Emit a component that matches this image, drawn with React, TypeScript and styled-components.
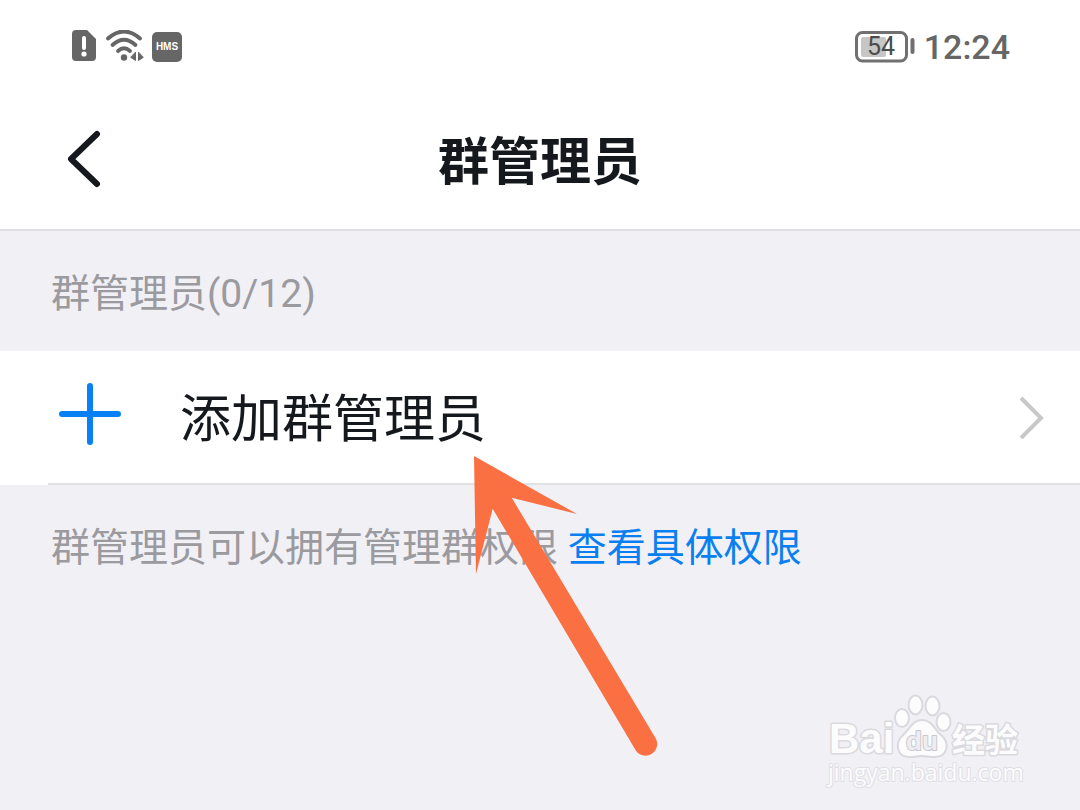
import React from 'react';
import styled, { createGlobalStyle } from 'styled-components';

const GlobalStyle = createGlobalStyle`
  *, *::before, *::after { box-sizing: border-box; }
  body {
    margin: 0;
    background: #f1f0f5;
    font-family: Roboto, 'Noto Sans CJK SC', sans-serif;
  }
`;

const Page = styled.div`
  position: relative;
  min-height: 100vh;
  overflow: hidden;
  background: #f1f0f5;
`;

const Top = styled.header`
  background: #fff;
  border-bottom: 2px solid #e0e1e2;
`;

const StatusBar = styled.div`
  display: flex;
  align-items: center;
  justify-content: space-between;
  height: 94px;
  padding: 0 70px;
`;

const StatusGroup = styled.div`
  display: flex;
  align-items: center;
  gap: 8px;
  color: #666;
`;

const Hms = styled.span`
  width: 30px;
  height: 30px;
  border-radius: 5px;
  background: #666;
  color: #fff;
  font: bold 10px/30px 'Liberation Sans', sans-serif;
  text-align: center;
`;

const Clock = styled.time`
  font-size: 34px;
  line-height: 40px;
  font-weight: 500;
`;

const NavBar = styled.div`
  display: grid;
  grid-template-columns: 80px 1fr 80px;
  align-items: center;
  height: 135px;
  padding: 0 44px;
`;

const BackButton = styled.button`
  display: flex;
  justify-content: center;
  width: 80px;
  padding: 10px 0 16px;
  border: 0;
  background: none;
  cursor: pointer;
`;

const Title = styled.h1`
  margin: 0;
  padding-top: 2px;
  color: #15181c;
  font-size: 51px;
  line-height: 60px;
  font-weight: 700;
  text-align: center;
`;

const Note = styled.p`
  margin: 0;
  padding: 35px 51px 29px;
  color: #9a9a9f;
  font-size: 39px;
  line-height: 56px;
`;

const NoteLink = styled.a`
  color: #0a80f0;
  text-decoration: none;
`;

const AddRow = styled.button`
  position: relative;
  display: flex;
  align-items: center;
  width: 100%;
  height: 134px;
  padding: 0 34px 2px 56px;
  border: 0;
  background: #fff;
  color: #15181c;
  font: inherit;
  font-size: 51px;
  line-height: 60px;
  text-align: left;
  cursor: pointer;

  &::after {
    content: '';
    position: absolute;
    right: 0;
    bottom: 0;
    left: 48px;
    height: 2px;
    background: #e0e2e4;
  }
`;

const RowLabel = styled.span`
  flex: 1;
  margin-left: 56px;
  padding-top: 6px;
`;

const Pointer = styled.svg`
  position: absolute;
  top: 452px;
  left: 470px;
  pointer-events: none;
`;

const Watermark = styled.svg`
  position: absolute;
  right: 50px;
  bottom: 15px;
  pointer-events: none;
`;

const SimIcon = () => (
  <svg width="28" height="34" viewBox="0 0 28 34" aria-hidden="true">
    <path d="M6 0H17L26 9V27Q26 31 22 31H6Q2 31 2 27V4Q2 0 6 0Z" fill="#666" />
    <path d="M14 8V18" stroke="#fff" strokeWidth="4" strokeLinecap="round" />
    <circle cx="14" cy="24" r="2.6" fill="#fff" />
  </svg>
);

const WifiIcon = () => (
  <svg width="38" height="34" viewBox="0 0 38 34" fill="none" stroke="#666" strokeWidth="3.8" strokeLinecap="round" aria-hidden="true">
    <path d="M2 8.5Q18 -5.5 34 8.5" />
    <path d="M6.5 15Q18 4.5 29.5 15" />
    <path d="M12 21Q18 15.5 24 21" />
    <circle cx="18" cy="27.5" r="3.2" fill="#666" stroke="none" />
    <path d="M29.5 22.5V30.5L25 27.5ZM32.5 22.5V30.5L37 27.5Z" fill="#666" strokeWidth="1" strokeLinejoin="round" />
  </svg>
);

const BatteryIcon = () => (
  <svg width="62" height="34" viewBox="0 0 62 34" role="img" aria-label="54%">
    <rect x="2.5" y="2.5" width="50" height="28.5" rx="6" fill="none" stroke="#707070" strokeWidth="3" />
    <rect x="7" y="7" width="25" height="20" rx="2" fill="#c6c6c6" />
    <rect x="56.5" y="8" width="4" height="16" rx="2" fill="#707070" />
    <text x="27" y="25" textAnchor="middle" fontFamily="Roboto, sans-serif" fontSize="25" fill="#4c4c4c">54</text>
  </svg>
);

const App = () => (
  <Page>
    <GlobalStyle />
    <Top>
      <StatusBar>
        <StatusGroup>
          <SimIcon />
          <WifiIcon />
          <Hms>HMS</Hms>
        </StatusGroup>
        <StatusGroup>
          <BatteryIcon />
          <Clock>12:24</Clock>
        </StatusGroup>
      </StatusBar>
      <NavBar>
        <BackButton type="button" aria-label="返回">
          <svg width="34" height="58" viewBox="0 0 34 58" fill="none" stroke="#15181c" strokeWidth="6" strokeLinecap="round" strokeLinejoin="round" aria-hidden="true">
            <path d="M30 4L4 29L30 54" />
          </svg>
        </BackButton>
        <Title>群管理员</Title>
      </NavBar>
    </Top>
    <main>
      <Note>群管理员(0/12)</Note>
      <AddRow type="button">
        <svg width="68" height="68" viewBox="0 0 68 68" stroke="#0a80f5" strokeWidth="6" strokeLinecap="round" aria-hidden="true">
          <path d="M34 3V59M6 31H62" />
        </svg>
        <RowLabel>添加群管理员</RowLabel>
        <svg width="28" height="44" viewBox="0 0 28 44" fill="none" stroke="#c8c8c8" strokeWidth="4" aria-hidden="true">
          <path d="M3 3L23 23L3 43" />
        </svg>
      </AddRow>
      <Note>
        群管理员可以拥有管理群权限 <NoteLink href="#permissions">查看具体权限</NoteLink>
      </Note>
    </main>
    <Pointer width="192" height="310" viewBox="0 0 192 310" aria-hidden="true">
      <path d="M4 4L107 62L41.7 45.7L185.5 286A11.5 11.5 0 0 1 165.5 298L22.7 56.7L6 122Z" fill="#fa7042" />
    </Pointer>
    <Watermark width="206" height="104" viewBox="0 0 206 104" fill="#fcfcfd" stroke="#d9d9de" strokeWidth="2" strokeLinejoin="round" fontFamily="'Liberation Sans', 'Noto Sans CJK SC', sans-serif">
      <ellipse cx="78" cy="27" rx="7" ry="9" />
      <ellipse cx="91.5" cy="14" rx="7" ry="9.5" />
      <ellipse cx="108.5" cy="15" rx="7" ry="9.5" />
      <ellipse cx="119.5" cy="31" rx="7" ry="9" />
      <path d="M98 29C108 29 110 38 117 44C126 51 124 66 111 66C105 66 102 65 98 65C94 65 90 66 85 66C72 66 71 51 79 44C86 38 88 29 98 29Z" />
      <g paintOrder="stroke">
        <text x="5" y="62" fontSize="42" fontWeight="700" strokeWidth="3">Bai</text>
        <text x="82" y="59" fontSize="26" fontWeight="700" fill="#eeeef2" stroke="#c8c8ce">du</text>
        <text x="128" y="61" fontSize="33" fontWeight="700" strokeWidth="3">经验</text>
        <text x="4" y="90" fontSize="23" stroke="#dfdfe4" fontFamily="'Open Sans', sans-serif">jingyan.baidu.com</text>
      </g>
    </Watermark>
  </Page>
);

export default App;
